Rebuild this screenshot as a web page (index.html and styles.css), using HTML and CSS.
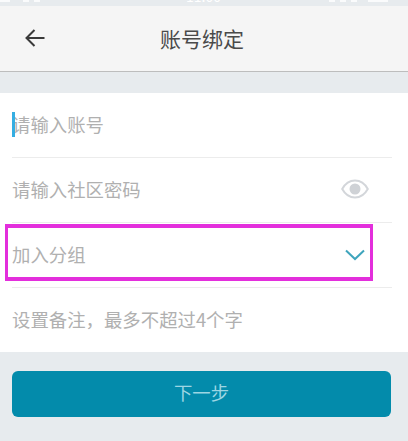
FILE: index.html
```html
<!DOCTYPE html>
<html lang="zh">
<head>
<meta charset="utf-8">
<title>账号绑定</title>
<link rel="stylesheet" href="styles.css">
</head>
<body>
<div class="status">
  <span class="status-side"><i class="bit wide"></i><i class="bit"></i><i class="bit"></i></span>
  <span class="clock">11:00</span>
  <span class="status-side"><i class="bit"></i><i class="bit"></i><i class="bit"></i><i class="bit battery"></i></span>
</div>
<header class="header">
  <svg class="back" width="22" height="20" viewBox="0 0 22 20"><path d="M20.5 10H2.5M10.5 2L2.5 10L10.5 18" fill="none" stroke="#3a3a3a" stroke-width="2"/></svg>
  <h1 class="title">账号绑定</h1>
</header>
<main class="form">
  <div class="row"><span class="caret"></span><span class="text">请输入账号</span></div>
  <div class="row">
    <span class="text">请输入社区密码</span>
    <svg class="eye" width="28" height="22" viewBox="0 0 28 22"><path d="M1.2 11C4.5 5 9 2.5 14 2.5S23.5 5 26.8 11C23.5 17 19 19.5 14 19.5S4.5 17 1.2 11Z" fill="none" stroke="#d3d6da" stroke-width="2"/><circle cx="14" cy="11" r="5.5" fill="#cfd2d6"/></svg>
  </div>
  <div class="row">
    <span class="text">加入分组</span>
    <svg class="chevron" width="20" height="12" viewBox="0 0 20 12"><path d="M1 1.5L10 10L19 1.5" fill="none" stroke="#3fa5bd" stroke-width="2"/></svg>
    <div class="highlight"></div>
  </div>
  <div class="row last"><span class="text">设置备注，最多不超过4个字</span></div>
</main>
<div class="actions"><button class="next">下一步</button></div>
</body>
</html>
```
FILE: styles.css
```css
* { box-sizing: border-box; }
html, body { margin: 0; height: 100%; }
body {
  background: #e7ebee;
  font-family: "Noto Sans CJK SC", "Noto Sans", sans-serif;
  overflow: hidden;
}
.status {
  height: 6px;
  background: #e7ebee;
  overflow: hidden;
  display: flex;
  justify-content: space-between;
  padding: 0 20px 0 0;
  position: relative;
}
.status-side { display: flex; gap: 5px; align-items: flex-start; }
.bit { display: block; width: 6px; height: 2px; background: #fff; opacity: .8; }
.bit.wide { width: 10px; margin-right: 8px; }
.bit.battery { width: 20px; margin-left: 6px; }
.clock {
  position: absolute;
  left: 186px;
  top: -14px;
  font-size: 14px;
  line-height: 20px;
  color: #fff;
}
.header {
  height: 66px;
  background: #f5f5f5;
  border-bottom: 1px solid #bdbdbd;
  display: flex;
  align-items: center;
  justify-content: center;
  position: relative;
}
.back { position: absolute; left: 24px; top: 22px; }
.title { margin: 0 4px 0 0; font-size: 21px; font-weight: 400; color: #4a4a4a; line-height: 1; }
.form { margin-top: 21px; background: #fff; padding: 0 16px 0 12px; height: 259px; }
.row {
  height: 65px;
  border-bottom: 1px solid #ececec;
  display: flex;
  align-items: center;
  justify-content: space-between;
  position: relative;
}
.row.last { border-bottom: 0; }
.text { font-size: 18.4px; color: #b0b0b0; line-height: 1; margin-top: -2px; }
.caret { position: absolute; left: 0; top: 19px; width: 3px; height: 25px; background: #35aee2; }
.eye { margin-right: 23px; margin-top: -2px; }
.chevron { margin-right: 27px; margin-top: -1px; }
.highlight {
  position: absolute;
  left: -7px;
  top: 1px;
  width: 368px;
  height: 57px;
  border-style: solid;
  border-width: 4px 3px;
  border-color: #e32fdc;
}
.actions { padding: 19px 17px 0 12px; }
.next {
  display: block;
  width: 100%;
  height: 46px;
  border: 0;
  border-radius: 6px;
  background: #038bab;
  color: #9dd6e3;
  font: inherit;
  font-size: 18.4px;
  line-height: 1;
  padding: 0 0 3px;
}
```
